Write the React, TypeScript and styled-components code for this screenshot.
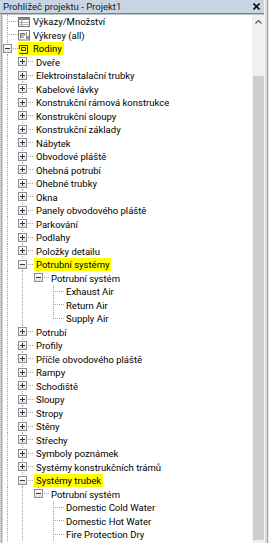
import React from 'react';
import styled, { createGlobalStyle } from 'styled-components';

const GlobalStyle = createGlobalStyle`
  html, body { margin: 0; padding: 0; background: #ffffff; }
  body { font-family: Roboto, "Noto Sans", sans-serif; }
  * { box-sizing: border-box; }
`;

const Panel = styled.div`
  width: 269px;
  height: 543px;
  display: flex;
  overflow: hidden;
  background: #ffffff;
`;

const Main = styled.div`
  flex: 1;
  min-width: 0;
  display: flex;
  flex-direction: column;
`;

const RightFrame = styled.div`
  flex: 0 0 5px;
  background: linear-gradient(to right, #f6f6f6 0 1px, #dadada 1px 3px, #a9a9a9 3px 4px, #e2e2e2 4px);
`;

const TitleBar = styled.div`
  flex: 0 0 14px;
  display: flex;
  align-items: center;
  justify-content: space-between;
  padding: 0 4px 0 3px;
  background: #c8d6e4;
  border-bottom: 1px solid #7f7f7f;
  font-size: 9.5px;
  line-height: 13px;
  color: #1a1a1a;
  white-space: nowrap;
`;

const CloseIcon = styled.svg`
  width: 7px;
  height: 7px;
  display: block;
`;

const Body = styled.div`
  flex: 1;
  min-height: 0;
  display: flex;
  border-top: 1px solid #c4c4c4;
`;

const Rail = styled.div`
  flex: 0 0 3px;
  background: linear-gradient(to right, #d4d4d4 0 1px, #a6a6a6 1px 2px, #dedede 2px 3px);
`;

const Tree = styled.div`
  flex: 1;
  min-width: 0;
  overflow: hidden;
  font-size: 9.5px;
  color: #000000;
`;

const Row = styled.div<{ $tall: boolean }>`
  height: ${(p) => (p.$tall ? 14 : 13)}px;
  display: flex;
  align-items: stretch;
  white-space: nowrap;
`;

type Vert = 'none' | 'full' | 'top';

const Cell = styled.span<{ $w: number; $v: Vert; $h: boolean }>`
  position: relative;
  flex: 0 0 ${(p) => p.$w}px;
  display: flex;
  align-items: center;

  &::before {
    content: '';
    display: ${(p) => (p.$v === 'none' ? 'none' : 'block')};
    position: absolute;
    left: 4px;
    top: 0;
    width: 1px;
    height: ${(p) => (p.$v === 'top' ? '50%' : '100%')};
    background-image: linear-gradient(to bottom, #a3a3a3 50%, transparent 50%);
    background-size: 1px 2px;
  }

  &::after {
    content: '';
    display: ${(p) => (p.$h ? 'block' : 'none')};
    position: absolute;
    left: 4px;
    right: 0;
    top: 6px;
    height: 1px;
    background-image: linear-gradient(to right, #a3a3a3 50%, transparent 50%);
    background-size: 2px 1px;
  }
`;

const Toggle = styled.span`
  position: relative;
  z-index: 1;
  width: 9px;
  height: 9px;
  margin-top: -1px;
  border: 1px solid #8f8f8f;
  background: linear-gradient(#ffffff, #e2e2e2);
  display: flex;
  align-items: center;
  justify-content: center;
`;

const ToggleSign = styled.svg`
  width: 5px;
  height: 5px;
  display: block;
`;

const Highlight = styled.span<{ $on: boolean }>`
  display: flex;
  align-items: center;
  height: 100%;
  background: ${(p) => (p.$on ? '#ffff00' : 'transparent')};
`;

const IconBox = styled.svg`
  width: 12px;
  height: 12px;
  display: block;
  margin-right: 1px;
`;

const Label = styled.span`
  padding: 0 2px;
  line-height: 13px;
`;

const ScrollBar = styled.div`
  flex: 0 0 12px;
  display: flex;
  flex-direction: column;
  background: #f0f0f0;
`;

const ScrollButton = styled.div`
  flex: 0 0 14px;
  display: flex;
  align-items: center;
  justify-content: center;
`;

const ScrollTrack = styled.div`
  flex: 1;
  display: flex;
  flex-direction: column;
  padding: 47px 0 3px 1px;
`;

const Thumb = styled.div`
  flex: 1;
  background: #cdcdcd;
`;

type IconKind = 'schedule' | 'sheet' | 'family';

type RowData = {
  label: string;
  guides: boolean[];
  own: Vert;
  toggle?: '+' | '-';
  icon?: IconKind;
  hl?: boolean;
};

const widths = [15, 16, 15, 15];

const familiesA = [
  'Dveře',
  'Elektroinstalační trubky',
  'Kabelové lávky',
  'Konstrukční rámová konstrukce',
  'Konstrukční sloupy',
  'Konstrukční základy',
  'Nábytek',
  'Obvodové pláště',
  'Ohebná potrubí',
  'Ohebné trubky',
  'Okna',
  'Panely obvodového pláště',
  'Parkování',
  'Podlahy',
  'Položky detailu',
];

const familiesB = [
  'Potrubí',
  'Profily',
  'Příčle obvodového pláště',
  'Rampy',
  'Schodiště',
  'Sloupy',
  'Stropy',
  'Stěny',
  'Střechy',
  'Symboly poznámek',
  'Systémy konstrukčních trámů',
];

const fam = (label: string): RowData => ({ label, guides: [true], own: 'full', toggle: '+' });

const rows: RowData[] = [
  { label: 'Výkazy/Množství', guides: [], own: 'full', icon: 'schedule' },
  { label: 'Výkresy (all)', guides: [], own: 'full', icon: 'sheet' },
  { label: 'Rodiny', guides: [], own: 'full', toggle: '-', icon: 'family', hl: true },
  ...familiesA.map(fam),
  { label: 'Potrubní systémy', guides: [true], own: 'full', toggle: '-', hl: true },
  { label: 'Potrubní systém', guides: [true, true], own: 'top', toggle: '-' },
  { label: 'Exhaust Air', guides: [true, true, false], own: 'full' },
  { label: 'Return Air', guides: [true, true, false], own: 'full' },
  { label: 'Supply Air', guides: [true, true, false], own: 'top' },
  ...familiesB.map(fam),
  { label: 'Systémy trubek', guides: [true], own: 'full', toggle: '-', hl: true },
  { label: 'Potrubní systém', guides: [true, true], own: 'top', toggle: '-' },
  { label: 'Domestic Cold Water', guides: [true, true, false], own: 'full' },
  { label: 'Domestic Hot Water', guides: [true, true, false], own: 'full' },
  { label: 'Fire Protection Dry', guides: [true, true, false], own: 'full' },
];

function TreeIcon({ kind }: { kind: IconKind }) {
  if (kind === 'schedule') {
    return (
      <IconBox viewBox="0 0 12 12">
        <rect x="0.5" y="1.5" width="11" height="9" fill="#ffffff" stroke="#767676" />
        <rect x="1" y="2" width="10" height="2" fill="#8a8a8a" />
        <line x1="3.5" y1="4" x2="3.5" y2="10" stroke="#9c9c9c" />
        <line x1="1" y1="6.5" x2="11" y2="6.5" stroke="#b4b4b4" />
        <line x1="1" y1="8.5" x2="11" y2="8.5" stroke="#b4b4b4" />
      </IconBox>
    );
  }
  if (kind === 'sheet') {
    return (
      <IconBox viewBox="0 0 12 12">
        <rect x="0.5" y="1.5" width="11" height="9.5" fill="#ffffff" stroke="#7a7a7a" />
        <path d="M2.5 9.5 V4.5 H6.5 V6.5" fill="none" stroke="#6a6a6a" />
        <rect x="3" y="5" width="3" height="4" fill="#b8b8b8" />
        <line x1="8.5" y1="3" x2="8.5" y2="10" stroke="#8c8c8c" />
        <rect x="9" y="7" width="2" height="3" fill="#9a9a9a" />
      </IconBox>
    );
  }
  return (
    <IconBox viewBox="0 0 12 12">
      <path d="M1.5 2.5 H9.5 V10.5 H1.5" fill="none" stroke="#3a3a3a" />
      <path d="M3.5 4.5 H7.5 V7.5 H3.5 Z" fill="none" stroke="#3a3a3a" />
      <line x1="1.5" y1="2.5" x2="1.5" y2="6" stroke="#3a3a3a" />
    </IconBox>
  );
}

function TreeRow({ row, index }: { row: RowData; index: number }) {
  const level = row.guides.length;
  return (
    <Row $tall={index % 2 === 1}>
      {row.guides.map((g, i) => (
        <Cell key={i} $w={widths[i]} $v={g ? 'full' : 'none'} $h={false} />
      ))}
      <Cell $w={widths[level]} $v={row.own} $h>
        {row.toggle && (
          <Toggle>
            <ToggleSign viewBox="0 0 5 5">
              <line x1="0" y1="2.5" x2="5" y2="2.5" stroke="#2c3550" />
              {row.toggle === '+' && <line x1="2.5" y1="0" x2="2.5" y2="5" stroke="#2c3550" />}
            </ToggleSign>
          </Toggle>
        )}
      </Cell>
      <Highlight $on={!!row.hl}>
        {row.icon && <TreeIcon kind={row.icon} />}
        <Label>{row.label}</Label>
      </Highlight>
    </Row>
  );
}

export default function App() {
  return (
    <>
      <GlobalStyle />
      <Panel>
        <Main>
          <TitleBar>
            <span>Prohlížeč projektu - Projekt1</span>
            <CloseIcon viewBox="0 0 7 7">
              <path d="M0.5 0.5 L6.5 6.5 M6.5 0.5 L0.5 6.5" stroke="#111111" strokeWidth="1.6" />
            </CloseIcon>
          </TitleBar>
          <Body>
            <Rail />
            <Tree>
              {rows.map((r, i) => (
                <TreeRow key={i} row={r} index={i} />
              ))}
            </Tree>
            <ScrollBar>
              <ScrollButton>
                <svg width="7" height="4" viewBox="0 0 7 4">
                  <path d="M0.5 3.5 L3.5 0.5 L6.5 3.5" fill="none" stroke="#5a5a5a" strokeWidth="1.2" />
                </svg>
              </ScrollButton>
              <ScrollTrack>
                <Thumb />
              </ScrollTrack>
            </ScrollBar>
          </Body>
        </Main>
        <RightFrame />
      </Panel>
    </>
  );
}
